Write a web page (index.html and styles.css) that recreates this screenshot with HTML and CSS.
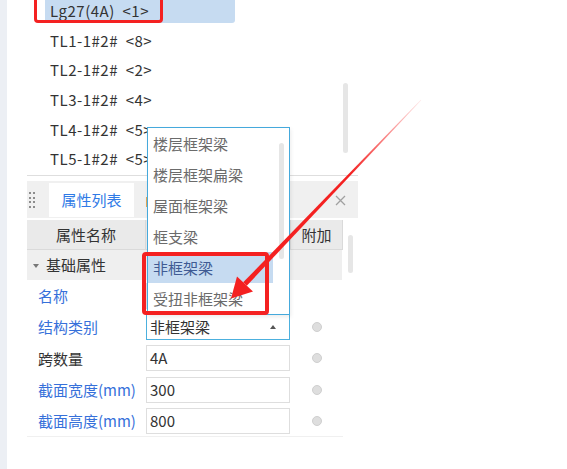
FILE: index.html
```html
<!DOCTYPE html>
<html lang="zh-CN">
<head>
    <meta charset="UTF-8">
    <title>构件属性</title>
    <link rel="stylesheet" href="styles.css">
</head>
<body>

    <div class="app">
        <div class="dock-strip"></div>

        <div class="content">
            <!-- Component tree -->
            <div class="tree">
                <ul class="tree-list">
                    <li class="tree-item selected">Lg27(4A)  &lt;1&gt;</li>
                    <li class="tree-item">TL1-1#2#  &lt;8&gt;</li>
                    <li class="tree-item">TL2-1#2#  &lt;2&gt;</li>
                    <li class="tree-item">TL3-1#2#  &lt;4&gt;</li>
                    <li class="tree-item">TL4-1#2#  &lt;5&gt;</li>
                    <li class="tree-item">TL5-1#2#  &lt;5&gt;</li>
                </ul>
                <div class="scroll tree-scroll"><div class="thumb"></div></div>
            </div>

            <!-- Property panel -->
            <div class="panel">
                <div class="tab-bar">
                    <span class="grip">
                        <i></i><i></i><i></i><i></i><i></i><i></i><i></i><i></i>
                    </span>
                    <div class="tab active">属性列表</div>
                    <div class="tab"><span class="tab-icon"></span></div>
                    <svg class="tab-close" width="11" height="11" viewBox="0 0 11 11">
                        <path d="M1 1 L10 10 M10 1 L1 10" stroke="#a0a0a0" stroke-width="1.3" fill="none"/>
                    </svg>
                </div>

                <div class="panel-body">
                    <div class="prop-table">
                        <div class="prop-row head">
                            <div class="cell">属性名称</div>
                            <div class="cell"></div>
                            <div class="cell">附加</div>
                        </div>
                        <div class="group-row">
                            <span class="caret"></span>基础属性
                        </div>
                        <div class="prop-row">
                            <div class="label link">名称</div>
                            <div class="value"><div class="input"></div></div>
                            <div class="extra"></div>
                        </div>
                        <div class="prop-row">
                            <div class="label link">结构类别</div>
                            <div class="value">
                                <div class="input select">非框架梁<span class="select-arrow"></span></div>
                            </div>
                            <div class="extra"><span class="radio"></span></div>
                        </div>
                        <div class="prop-row">
                            <div class="label">跨数量</div>
                            <div class="value"><div class="input">4A</div></div>
                            <div class="extra"><span class="radio"></span></div>
                        </div>
                        <div class="prop-row">
                            <div class="label link">截面宽度(mm)</div>
                            <div class="value"><div class="input">300</div></div>
                            <div class="extra"><span class="radio"></span></div>
                        </div>
                        <div class="prop-row">
                            <div class="label link">截面高度(mm)</div>
                            <div class="value"><div class="input">800</div></div>
                            <div class="extra"><span class="radio"></span></div>
                        </div>
                    </div>
                    <div class="scroll panel-scroll"><div class="thumb"></div></div>
                </div>
            </div>
        </div>
    </div>

    <!-- Open list of 结构类别 -->
    <div class="dropdown">
        <ul class="options">
            <li>楼层框架梁</li>
            <li>楼层框架扁梁</li>
            <li>屋面框架梁</li>
            <li>框支梁</li>
            <li class="current">非框架梁</li>
            <li>受扭非框架梁</li>
        </ul>
        <div class="scroll dropdown-scroll"><div class="thumb"></div></div>
    </div>

    <!-- Annotations -->
    <div class="mark mark-item"></div>
    <div class="mark mark-option"></div>
    <svg class="arrow" width="567" height="469" viewBox="0 0 567 469">
        <defs>
            <linearGradient id="fade" gradientUnits="userSpaceOnUse" x1="421" y1="100" x2="350" y2="174">
                <stop offset="0" stop-color="#f42121" stop-opacity="0.1"/>
                <stop offset="1" stop-color="#f42121" stop-opacity="1"/>
            </linearGradient>
        </defs>
        <polygon fill="url(#fade)" points="421.2,100.2 420.8,99.8 243.2,282.3 246.8,285.7"/>
        <polygon fill="#f42121" points="231,298.5 237,276.4 253,291.6"/>
    </svg>

</body>
</html>
```

FILE: styles.css
```css
body {
    margin: 0;
    font-family: "Noto Sans CJK SC", "Noto Sans", sans-serif;
    font-size: 15px;
    color: #333;
    background-color: #fff;
    overflow: hidden;
}
ul {
    list-style: none;
    margin: 0;
    padding: 0;
}
.app {
    display: flex;
    height: 469px;
}
.dock-strip {
    width: 7px;
    background-color: #eceff4;
}
.content {
    width: 331px;
    padding-left: 20px;
}

/* tree */
.tree {
    display: flex;
    height: 175px;
    border-bottom: 1px solid #dedede;
    overflow: hidden;
}
.tree-list {
    display: flex;
    flex-direction: column;
    gap: 3.7px;
    margin-top: -3px;
    margin-left: 18px;
    width: 190px;
}
.tree-item {
    height: 26px;
    line-height: 28px;
    padding-left: 5px;
    letter-spacing: 0.5px;
    white-space: pre;
    border-radius: 3px;
}
.tree-item.selected {
    background-color: #c6dbf1;
}
.scroll .thumb {
    width: 5px;
    border-radius: 3px;
    background-color: #e6e6e6;
}
.tree-scroll {
    margin-left: auto;
    margin-right: 10px;
}
.tree-scroll .thumb {
    margin-top: 83px;
    height: 70px;
}

/* panel */
.panel {
    margin-top: 5px;
}
.tab-bar {
    display: flex;
    align-items: flex-start;
    height: 37px;
    background-color: #f0f0f0;
}
.grip {
    display: grid;
    grid-template-columns: 2px 2px;
    column-gap: 2px;
    row-gap: 2.7px;
    margin: 11px 0 0 2px;
}
.grip i {
    width: 2px;
    height: 2px;
    background-color: #8c8c8c;
}
.tab {
    height: 34px;
    line-height: 34px;
    margin-top: 2px;
}
.tab.active {
    width: 85px;
    margin-left: 14px;
    text-align: center;
    color: #2f7ae6;
    background-color: #fff;
}
.tab-icon {
    display: inline-block;
    width: 3px;
    height: 10px;
    margin: 14px 0 0 12px;
    vertical-align: top;
    background-color: #e2a95a;
}
.tab-close {
    margin: 14px 12px 0 auto;
}

.panel-body {
    display: flex;
    margin-top: 2px;
}
.prop-table {
    width: 316px;
    border-bottom: 1px solid #f0f0f0;
}
.prop-row {
    display: grid;
    grid-template-columns: 119px 145px 52px;
    height: 31.3px;
    align-items: center;
}
.prop-row.head {
    height: 30px;
}
.head .cell {
    height: 29px;
    line-height: 29px;
    text-align: center;
    background-color: #eaeaea;
    border-right: 1px solid #dadada;
    border-bottom: 1px solid #dadada;
}
.group-row {
    height: 30px;
    line-height: 30px;
    width: 315px;
    background-color: #efefef;
}
.caret {
    display: inline-block;
    width: 0;
    height: 0;
    margin: 0 7px 0 6px;
    vertical-align: 3px;
    border-left: 3px solid transparent;
    border-right: 3px solid transparent;
    border-top: 4px solid #777;
}
.label {
    padding-left: 11px;
    white-space: nowrap;
}
.label.link {
    color: #3670da;
}
.input {
    position: relative;
    box-sizing: border-box;
    width: 144px;
    height: 26px;
    line-height: 24px;
    padding-left: 3px;
    border: 1.5px solid #dedede;
    background-color: #fff;
}
.input.select {
    border-color: #4cb0de;
}
.select-arrow {
    position: absolute;
    right: 13px;
    top: 10px;
    border-left: 3.5px solid transparent;
    border-right: 3.5px solid transparent;
    border-bottom: 4px solid #555;
}
.extra {
    display: flex;
    justify-content: center;
}
.radio {
    box-sizing: border-box;
    width: 10px;
    height: 10px;
    border-radius: 50%;
    border: 1px solid #cfcfcf;
    background-color: #dedede;
}
.panel-scroll {
    margin-left: 5px;
}
.panel-scroll .thumb {
    margin-top: 15px;
    height: 38px;
}

/* dropdown list */
.dropdown {
    position: absolute;
    left: 147px;
    top: 127px;
    display: flex;
    width: 141px;
    height: 186px;
    border: 1px solid #45a9dc;
    background-color: #fff;
    box-shadow: 1px 2px 4px rgba(0, 0, 0, 0.08);
}
.options {
    width: 125px;
}
.options li {
    height: 31px;
    line-height: 31px;
    padding-left: 5px;
    color: #6b6b6b;
}
.options li.current {
    color: #3f5b94;
    background-color: #c6dbf1;
}
.dropdown-scroll {
    margin-left: 6px;
}
.dropdown-scroll .thumb {
    margin-top: 15px;
    height: 116px;
}

/* annotations */
.mark {
    position: absolute;
    box-sizing: border-box;
    border: 3.5px solid #f42121;
    border-radius: 4px;
}
.mark-item {
    left: 34px;
    top: -6px;
    width: 129px;
    height: 29px;
}
.mark-option {
    left: 142px;
    top: 252px;
    width: 127px;
    height: 63px;
    border-width: 4px;
}
.arrow {
    position: absolute;
    left: 0;
    top: 0;
}
```
